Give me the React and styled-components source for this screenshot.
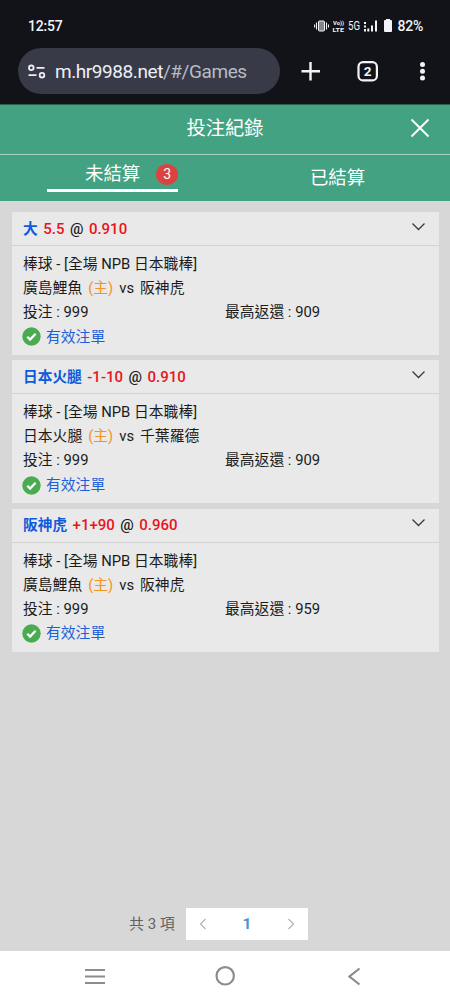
import * as React from "react";
import styled, { createGlobalStyle } from "styled-components";

const GlobalStyle = createGlobalStyle`
  * {
    box-sizing: border-box;
  }
  body {
    margin: 0;
    font-family: Roboto, "Noto Sans CJK TC", sans-serif;
    background: #d7d7d7;
  }
`;

const Page = styled.div`
  display: flex;
  flex-direction: column;
  width: 450px;
  height: 1000px;
  overflow: hidden;
  white-space: nowrap;
`;

const Chrome = styled.div`
  height: 104px;
  flex: none;
  background: #121318;
  color: #f3f3f7;
`;

const StatusBar = styled.div`
  display: flex;
  align-items: center;
  justify-content: space-between;
  height: 48px;
  padding: 4px 27px 0 28px;
`;

const Clock = styled.div`
  font-size: 14px;
  font-weight: 500;
  letter-spacing: -0.2px;
`;

const StatusIcons = styled.div`
  display: flex;
  align-items: center;
`;

const Battery = styled.div`
  font-size: 14px;
  font-weight: 500;
  line-height: 16px;
  margin-left: 3px;
  letter-spacing: -0.2px;
`;

const AddressRow = styled.div`
  display: flex;
  align-items: center;
  height: 46px;
  padding-left: 18px;
`;

const AddressBar = styled.div`
  display: flex;
  align-items: center;
  width: 262px;
  height: 46px;
  padding-left: 9px;
  border-radius: 23px;
  background: #383a48;
`;

const Url = styled.div`
  margin-left: 9px;
  padding-top: 1px;
  font-size: 19px;
  letter-spacing: -0.43px;
  color: #eeeef5;
`;

const UrlPath = styled.span`
  color: #b8bac6;
`;

const ChromeActions = styled.div`
  display: flex;
  align-items: center;
  margin-left: 19px;
`;

const Header = styled.div`
  display: grid;
  grid-template-columns: 60px 1fr 60px;
  align-items: center;
  flex: none;
  height: 51px;
  padding-bottom: 2px;
  background: #43a282;
  border-top: 1px solid #2b5f50;
  border-bottom: 1px solid #a5d3c3;
  color: #fff;
`;

const Title = styled.div`
  grid-column: 2;
  text-align: center;
  font-size: 19.3px;
  line-height: 28px;
`;

const CloseButton = styled.div`
  display: flex;
  justify-content: center;
  padding-bottom: 1px;
`;

const Tabs = styled.div`
  display: grid;
  grid-template-columns: 1fr 1fr;
  flex: none;
  height: 46px;
  background: #43a282;
  color: #fff;
  font-size: 18.4px;
  line-height: 28px;
`;

const Tab = styled.div`
  display: flex;
  justify-content: center;
  padding-top: ${({ $active }) => ($active ? "0" : "9px")};
`;

const TabLabel = styled.div`
  display: flex;
  align-items: center;
  width: ${({ $active }) => ($active ? "131px" : "auto")};
  height: ${({ $active }) => ($active ? "37px" : "28px")};
  padding: ${({ $active }) => ($active ? "4px 0 0 38px" : "0")};
  border-bottom: ${({ $active }) => ($active ? "3px solid #fff" : "none")};
`;

const Count = styled.div`
  width: 22px;
  height: 21px;
  margin-left: 16px;
  border-radius: 50%;
  background: #dc4340;
  font-size: 14px;
  line-height: 21px;
  text-align: center;
`;

const Content = styled.div`
  display: flex;
  flex-direction: column;
  flex: 1;
  padding: 11px 11px 11px 12px;
  background: #d7d7d7;
`;

const CardList = styled.div`
  display: flex;
  flex-direction: column;
  gap: 5.3px;
`;

const Card = styled.div`
  height: 143px;
  background: #e9e9e9;
  color: #1b1b1b;
`;

const CardHeader = styled.div`
  display: flex;
  align-items: center;
  justify-content: space-between;
  height: 34px;
  padding: 0 13px 0 11px;
  border-bottom: 1px solid #d2d2d2;

  svg {
    margin-bottom: 4px;
  }
`;

const Pick = styled.div`
  display: flex;
  gap: 5.5px;
  font-size: 15px;
  font-weight: 500;
  line-height: 24px;
`;

const Team = styled.span`
  color: #0c5bdc;
  font-size: 14.7px;
  font-weight: 700;
`;

const Odds = styled.span`
  color: #e8141c;
`;

const CardBody = styled.div`
  padding: 6px 11px 0;
  font-size: 14.8px;
  line-height: 24.1px;
`;

const Line = styled.div`
  display: flex;
  align-items: center;
  height: 24.1px;
`;

const Match = styled(Line)`
  gap: 6px;
`;

const Home = styled.span`
  color: #f39322;
`;

const Stake = styled.div`
  width: 202px;
`;

const Valid = styled(Line)`
  gap: 5px;
  height: 25px;
  margin-left: -1px;
  color: #1c5fd6;
`;

const Pager = styled.div`
  display: flex;
  align-items: center;
  margin-top: auto;
  padding-left: 117px;
  color: #626262;
  font-size: 15px;
`;

const Total = styled.div`
  padding-bottom: 3px;
`;

const PagerBox = styled.div`
  display: flex;
  align-items: center;
  justify-content: space-between;
  width: 122px;
  height: 32px;
  margin-left: 11px;
  padding: 0 13px;
  background: #fff;
`;

const PageNumber = styled.div`
  color: #4a94cc;
  font-size: 15.5px;
  font-weight: 700;
`;

const NavBar = styled.div`
  display: flex;
  align-items: center;
  flex: none;
  height: 49px;
  padding-left: 84px;
  background: #fff;
`;

const NavIcon = styled.svg`
  flex: none;
  margin-right: ${({ $gap }) => $gap || 0}px;
`;

const bets = [
  { team: "大", line: "5.5", odds: "0.910", home: "廣島鯉魚", away: "阪神虎", max: "909" },
  { team: "日本火腿", line: "-1-10", odds: "0.910", home: "日本火腿", away: "千葉羅德", max: "909" },
  { team: "阪神虎", line: "+1+90", odds: "0.960", home: "廣島鯉魚", away: "阪神虎", max: "959" },
];

const SignalIcons = () => (
  <svg width="80" height="18" viewBox="315 17 80 18" fill="#f3f3f7">
    <rect x="319.5" y="21" width="6" height="10" rx="1" fill="#85868b" stroke="#f3f3f7" />
    <path d="M317.5 22.5v7M315.6 24.5v3M327.5 22.5v7M329.5 24.5v3" stroke="#f3f3f7" strokeWidth="1.1" />
    <text x="334" y="24.6" fontSize="5.8" fontWeight="700" textLength="11" lengthAdjust="spacingAndGlyphs">Vo))</text>
    <text x="333.5" y="31.8" fontSize="5.8" fontWeight="700" textLength="11.5" lengthAdjust="spacingAndGlyphs">LTE</text>
    <text x="349" y="30.3" fontSize="12" textLength="12" lengthAdjust="spacingAndGlyphs">5G</text>
    <path d="M365 22h2v2h-2zM365 25.5h2v2h-2zM365 29h2v2.5h-2zM368.3 28.5h2v3h-2zM372 25.5h2v6h-2zM376 20.5h2v11h-2z" />
    <path d="M387 20v-1h4v1h1q1 0 1 1v10q0 1-1 1h-6q-1 0-1-1V21q0-1 1-1z" />
  </svg>
);

const TuneIcon = () => (
  <svg width="19" height="18" viewBox="27 62 19 18" fill="none" stroke="#eeeef5" strokeWidth="1.8">
    <circle cx="31.3" cy="67.8" r="2.3" />
    <circle cx="42" cy="75.2" r="2.3" />
    <path d="M36.5 67.8h8M28.5 75.2h8" />
  </svg>
);

const ActionIcons = () => (
  <svg width="132" height="30" viewBox="299 56 132 30" fill="none" stroke="#f3f3f7">
    <path d="M310.5 62v18.5M301.5 71.3h18.5" strokeWidth="2.4" />
    <rect x="358.5" y="62.2" width="18.4" height="18.2" rx="4.5" strokeWidth="2.2" />
    <text x="367.7" y="76.2" textAnchor="middle" fontSize="13.5" fontWeight="700" fill="#f3f3f7" stroke="none">2</text>
    <g fill="#f3f3f7" stroke="none">
      <circle cx="422.5" cy="64.5" r="2.5" />
      <circle cx="422.5" cy="71.3" r="2.5" />
      <circle cx="422.5" cy="78.1" r="2.5" />
    </g>
  </svg>
);

const CheckIcon = () => (
  <svg width="19" height="19" viewBox="0 0 19 19">
    <circle cx="9.5" cy="9.5" r="9.2" fill="#4aab50" />
    <path d="M5.3 9.7l2.8 2.8 5.5-5.7" fill="none" stroke="#fff" strokeWidth="2.3" />
  </svg>
);

const Chevron = ({ d, color, width, height }) => (
  <svg width={width} height={height} fill="none" stroke={color} strokeWidth="1.3">
    <path d={d} />
  </svg>
);

const BetCard = ({ bet }) => (
  <Card>
    <CardHeader>
      <Pick>
        <Team>{bet.team}</Team>
        <Odds>{bet.line}</Odds>
        <span>@</span>
        <Odds>{bet.odds}</Odds>
      </Pick>
      <Chevron width={15} height={12} color="#3a3a3a" d="M1.5 2.5l6 6 6-6" />
    </CardHeader>
    <CardBody>
      <Line>棒球 - [全場 NPB 日本職棒]</Line>
      <Match>
        <span>{bet.home}</span>
        <Home>(主)</Home>
        <span>vs</span>
        <span>{bet.away}</span>
      </Match>
      <Line>
        <Stake>投注 : 999</Stake>
        <div>最高返還 : {bet.max}</div>
      </Line>
      <Valid>
        <CheckIcon />
        <span>有效注單</span>
      </Valid>
    </CardBody>
  </Card>
);

const App = () => {
  return (
    <>
      <GlobalStyle />
      <Page>
        <Chrome>
          <StatusBar>
            <Clock>12:57</Clock>
            <StatusIcons>
              <SignalIcons />
              <Battery>82%</Battery>
            </StatusIcons>
          </StatusBar>
          <AddressRow>
            <AddressBar>
              <TuneIcon />
              <Url>
                m.hr9988.net<UrlPath>/#/Games</UrlPath>
              </Url>
            </AddressBar>
            <ChromeActions>
              <ActionIcons />
            </ChromeActions>
          </AddressRow>
        </Chrome>
        <Header>
          <Title>投注紀錄</Title>
          <CloseButton>
            <svg width="20" height="20" fill="none" stroke="#fff" strokeWidth="1.9">
              <path d="M1.5 1.5l17 17M18.5 1.5l-17 17" />
            </svg>
          </CloseButton>
        </Header>
        <Tabs>
          <Tab $active>
            <TabLabel $active>
              未結算
              <Count>3</Count>
            </TabLabel>
          </Tab>
          <Tab>
            <TabLabel>已結算</TabLabel>
          </Tab>
        </Tabs>
        <Content>
          <CardList>
            {bets.map((bet, index) => (
              <BetCard key={index} bet={bet} />
            ))}
          </CardList>
          <Pager>
            <Total>共 3 項</Total>
            <PagerBox>
              <Chevron width={8} height={12} color="#b5b5b5" d="M6.5 1l-5 5 5 5" />
              <PageNumber>1</PageNumber>
              <Chevron width={8} height={12} color="#b5b5b5" d="M1.5 1l5 5-5 5" />
            </PagerBox>
          </Pager>
        </Content>
        <NavBar>
          <NavIcon $gap={109} width="22" height="18" stroke="#8c8c8c" strokeWidth="2.2">
            <path d="M1 3h20M1 9.5h20M1 16h20" />
          </NavIcon>
          <NavIcon $gap={112} width="21" height="21" fill="none" stroke="#8c8c8c" strokeWidth="2.2">
            <circle cx="10.2" cy="10.8" r="8.7" />
          </NavIcon>
          <NavIcon width="14" height="20" fill="none" stroke="#8c8c8c" strokeWidth="2.2">
            <path d="M11.5 2.5L1.5 10.5l10 8" />
          </NavIcon>
        </NavBar>
      </Page>
    </>
  );
};

export default App;
